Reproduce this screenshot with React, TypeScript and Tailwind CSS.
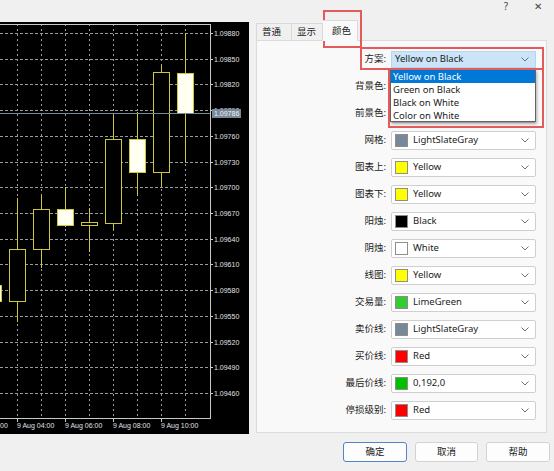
import React from "react";

const prices = [
  "1.09880", "1.09850", "1.09820", "1.09790", "1.09760", "1.09730", "1.09700", "1.09670",
  "1.09640", "1.09610", "1.09580", "1.09550", "1.09520", "1.09490", "1.09460",
];

const gridX = [17, 41, 65, 89, 113, 137, 161, 185];

// x = centre, t/b = body top/bottom, h/l = wick high/low, up = black (bull) body
const candles = [
  { x: -7, t: 285, b: 301, h: 285, l: 301, up: false },
  { x: 17, t: 249, b: 301, h: 198, l: 322, up: true },
  { x: 41, t: 209, b: 249, h: 195, l: 268, up: true },
  { x: 65, t: 209, b: 225, h: 187, l: 227, up: false },
  { x: 89, t: 222, b: 225, h: 208, l: 252, up: true },
  { x: 113, t: 139, b: 223, h: 115, l: 230, up: true },
  { x: 137, t: 139, b: 172, h: 112, l: 196, up: false },
  { x: 161, t: 72, b: 172, h: 65, l: 187, up: true },
  { x: 185, t: 73, b: 113, h: 33, l: 162, up: false },
];

const times = [
  { x: 17, t: "9 Aug 04:00" },
  { x: 65, t: "9 Aug 06:00" },
  { x: 113, t: "9 Aug 08:00" },
  { x: 161, t: "9 Aug 10:00" },
];

function Chart() {
  const py = (i: number) => Math.round(33 + i * 25.71);
  return (
    <svg width="249" height="412" className="block bg-black">
      <g transform="translate(0,-22)" fontFamily="'Liberation Sans', Arial, sans-serif" fontSize="7">
        {prices.map((p, i) => (
          <g key={p}>
            <line x1="0" x2="210" y1={py(i) + 0.5} y2={py(i) + 0.5} stroke="#959ca6" strokeDasharray="3 2" />
            <line x1="210" x2="213" y1={py(i) + 0.5} y2={py(i) + 0.5} stroke="#d0d0d0" />
            <text x="214" y={py(i) + 3} fill="#e0e0e0">{p}</text>
          </g>
        ))}
        {gridX.map((x) => (
          <line key={x} x1={x + 0.5} x2={x + 0.5} y1="24" y2="418" stroke="#959ca6" strokeDasharray="2 3" />
        ))}
        <line x1="0" x2="210" y1="24.5" y2="24.5" stroke="#c8c8c8" />
        <line x1="210.5" x2="210.5" y1="24" y2="419" stroke="#c8c8c8" />
        <line x1="0" x2="211" y1="418.5" y2="418.5" stroke="#c8c8c8" />
        {[-7, 17, 65, 113, 161].map((x) => (
          <line key={x} x1={x + 0.5} x2={x + 0.5} y1="418" y2="422" stroke="#c8c8c8" />
        ))}
        {times.map((t) => (
          <text key={t.x} x={t.x} y="428" fill="#e0e0e0">{t.t}</text>
        ))}
        <text x="0" y="428" fill="#e0e0e0">00</text>
        {candles.map((c) => (
          <g key={c.x}>
            <line x1={c.x + 0.5} x2={c.x + 0.5} y1={c.h} y2={c.l} stroke="#cfc73a" />
            <rect x={c.x - 7.5} y={c.t + 0.5} width="16" height={c.b - c.t} fill={c.up ? "#000" : "#fffff2"} stroke="#cfc73a" />
          </g>
        ))}
        <line x1="0" x2="210" y1="113.5" y2="113.5" stroke="#778899" />
        <rect x="212" y="109" width="29" height="9" fill="#778899" />
        <text x="214" y="116" fill="#f2f2f2">1.09786</text>
      </g>
    </svg>
  );
}

const rows = [
  { label: "网格", name: "LightSlateGray", sw: "bg-[#778899]" },
  { label: "图表上", name: "Yellow", sw: "bg-[#ffff00]" },
  { label: "图表下", name: "Yellow", sw: "bg-[#ffff00]" },
  { label: "阳烛", name: "Black", sw: "bg-[#000000]" },
  { label: "阴烛", name: "White", sw: "bg-[#ffffff]" },
  { label: "线图", name: "Yellow", sw: "bg-[#ffff00]" },
  { label: "交易量", name: "LimeGreen", sw: "bg-[#32cd32]" },
  { label: "卖价线", name: "LightSlateGray", sw: "bg-[#778899]" },
  { label: "买价线", name: "Red", sw: "bg-[#ff0000]" },
  { label: "最后价线", name: "0,192,0", sw: "bg-[#00c000]" },
  { label: "停损级别", name: "Red", sw: "bg-[#ff0000]" },
];

function Chevron() {
  return (
    <svg width="8" height="5" className="ml-auto shrink-0">
      <polyline points="0.5,0.5 4,4 7.5,0.5" fill="none" stroke="#707070" />
    </svg>
  );
}

function Row({ label, children }: { label: string; children: React.ReactNode }) {
  return (
    <div className="flex items-center h-[19px]">
      <div className="w-[129px] text-right text-[9.5px] text-[#1b1b1b]">{label}:</div>
      <div className="ml-[5px]">{children}</div>
    </div>
  );
}

function Combo({ children }: { children?: React.ReactNode }) {
  return (
    <div className="w-[145px] h-[19px] bg-white border border-[#cfcfcf] rounded-[2px] flex items-center pl-[3px] pr-[6px] text-[9.5px]">
      {children}
      <Chevron />
    </div>
  );
}

export default function App() {
  return (
    <div className="relative w-[554px] h-[471px] overflow-hidden bg-[#f0f0f0] font-['Noto_Sans','Noto_Sans_CJK_SC',sans-serif] text-[#1b1b1b]">
      <div className="h-[20px] flex items-start justify-end pr-[12px] gap-[26px] text-[10px] text-[#444] leading-[12px]">
        <span>?</span>
        <span>✕</span>
      </div>
      <div className="flex">
        <div className="mt-[2px] w-[249px] h-[412px]">
          <Chart />
        </div>
        <div className="ml-[7px] w-[298px] flex flex-col">
          <div className="h-[20px] flex items-end text-[9.5px]">
            <div className="w-[36px] h-[17px] border border-b-0 border-[#d9d9d9] flex items-center pl-[5px]">普通</div>
            <div className="w-[31px] h-[17px] border border-l-0 border-b-0 border-[#d9d9d9] flex items-center pl-[5px]">显示</div>
            <div className="w-[35px] h-[21px] -mb-[1px] relative z-10 border border-l-0 border-b-0 border-[#d9d9d9] bg-[#f9f9f9] flex items-center pl-[9px]">颜色</div>
          </div>
          <div className="relative w-[291px] h-[393px] bg-[#f9f9f9] border border-[#dcdcdc] pt-[9px] flex flex-col gap-[8px]">
            <Row label="方案">
              <div className="w-[145px] h-[17px] bg-[#cce4f7] border border-[#b8d4ee] flex items-center pl-[3px] pr-[6px] text-[9.5px]">
                <span>Yellow on Black</span>
                <Chevron />
              </div>
            </Row>
            <Row label="背景色">
              <Combo />
            </Row>
            <Row label="前景色">
              <Combo />
            </Row>
            {rows.map((r, i) => (
              <Row key={i} label={r.label}>
                <Combo>
                  <span className={`w-[13px] h-[13px] border border-[#8e8e8e] shrink-0 ${r.sw}`} />
                  <span className="ml-[5px]">{r.name}</span>
                </Combo>
              </Row>
            ))}
            <div className="absolute left-[133px] top-[28px] w-[146px] h-[53px] bg-white border border-[#646464] shadow-[1px_2px_3px_rgba(0,0,0,0.3)] text-[9.5px] leading-[13px] flex flex-col">
              <div className="bg-[#0078d7] text-white pl-[2px]">Yellow on Black</div>
              <div className="pl-[2px]">Green on Black</div>
              <div className="pl-[2px]">Black on White</div>
              <div className="pl-[2px]">Color on White</div>
            </div>
          </div>
          <div className="mt-[9px] flex justify-end gap-[8px] pr-[4px] text-[9.5px]">
            <button className="w-[64px] h-[20px] rounded-[3px] bg-[#fdfdfd] border border-[#4f86c6]">确定</button>
            <button className="w-[63px] h-[20px] rounded-[3px] bg-[#fdfdfd] border border-[#d3d3d3]">取消</button>
            <button className="w-[64px] h-[20px] rounded-[3px] bg-[#fdfdfd] border border-[#d3d3d3]">帮助</button>
          </div>
        </div>
      </div>
      <div className="absolute left-[323px] top-[10px] w-[39px] h-[38px] border-2 border-[#e25a5a]" />
      <div className="absolute left-[360px] top-[47px] w-[184px] h-[23px] border-2 border-[#e25a5a]" />
      <div className="absolute left-[388px] top-[68px] w-[156px] h-[60px] border-2 border-[#e25a5a]" />
    </div>
  );
}
